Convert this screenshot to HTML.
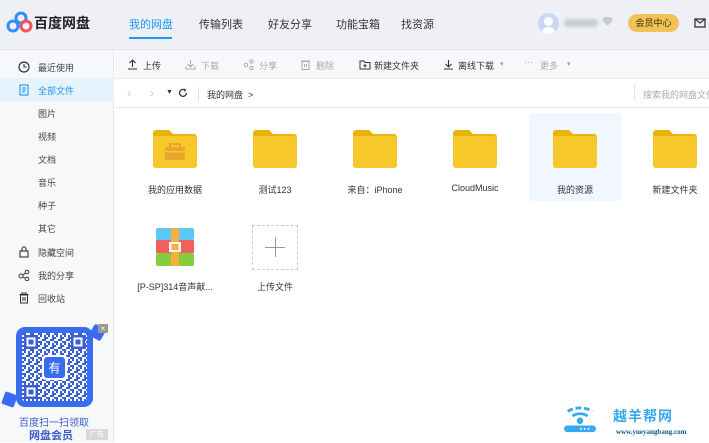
<!DOCTYPE html>
<html><head><meta charset="utf-8">
<style>
*{margin:0;padding:0;box-sizing:border-box}
body{width:709px;height:442px;overflow:hidden;background:#fff;font-family:"Liberation Sans","Noto Sans CJK SC",sans-serif;color:#333;position:relative}
.abs{position:absolute}
#top{left:0;top:0;width:709px;height:50px;background:#eef0f5;border-bottom:1px solid #e2e4ea}
.nav{position:absolute;top:16px;font-size:11px;color:#333}
#side{left:0;top:50px;width:114px;height:392px;background:#f7f8fa;border-right:1px solid #e6e8ee}
.si{position:absolute;left:38px;font-size:9px;color:#444}
.sico{position:absolute;left:18px}
#tb{left:115px;top:50px;width:594px;height:29px;background:#f7f8fa;border-bottom:1px solid #eaecf0}
.tbi{position:absolute;top:9px;font-size:9px;color:#333}
.dis{color:#aaa}
#bc{left:115px;top:79px;width:594px;height:29px;background:#fff;border-bottom:1px solid #eaecf0}
.fold{position:absolute;width:44px;height:38px}
.lbl{position:absolute;font-size:9px;color:#333;text-align:center;width:96px}
</style></head><body>
<div id="top" class="abs">
  <svg class="abs" style="left:6px;top:11px" width="28" height="22" viewBox="0 0 28 22">
    <circle cx="15" cy="7" r="5" fill="none" stroke="#2e8dfa" stroke-width="3"/>
    <circle cx="7" cy="15" r="5" fill="none" stroke="#2e8dfa" stroke-width="3"/>
    <circle cx="20" cy="15" r="5" fill="none" stroke="#f0545c" stroke-width="3"/>
  </svg>
  <div class="abs" style="left:34px;top:13px;font-size:14px;font-weight:bold;color:#222">百度网盘</div>
  <div class="nav" style="left:129px;color:#1f97f4">我的网盘</div>
  <div class="abs" style="left:129px;top:37px;width:43px;height:2px;background:#1f97f4"></div>
  <div class="nav" style="left:199px">传输列表</div>
  <div class="nav" style="left:268px">好友分享</div>
  <div class="nav" style="left:336px">功能宝箱</div>
  <div class="nav" style="left:401px">找资源</div>
  <div class="abs" style="left:538px;top:13px;width:21px;height:21px;border-radius:50%;background:#c9d9f3;overflow:hidden"><div style="position:absolute;left:6px;top:4px;width:9px;height:9px;border-radius:50%;background:#fff"></div><div style="position:absolute;left:4px;top:14px;width:13px;height:7px;border-radius:6px 6px 0 0;background:#fff"></div></div>
  <div class="abs" style="left:564px;top:19px;width:34px;height:8px;border-radius:4px;background:#c8cbd2;filter:blur(1.5px)"></div>
  <div class="abs" style="left:602px;top:17px;width:11px;height:9px;background:#c8cad0;clip-path:polygon(20% 0,80% 0,100% 35%,50% 100%,0 35%)"></div>
  <div class="abs" style="left:628px;top:14px;width:51px;height:18px;border-radius:9px;background:#f1c256;font-size:9px;color:#3a2a00;text-align:center;line-height:18px">会员中心</div>
  <svg class="abs" style="left:694px;top:18px" width="12" height="10" viewBox="0 0 12 10"><rect x="1" y="1" width="10" height="8" fill="none" stroke="#333" stroke-width="1.3"/><path d="M1 1 L6 5 L11 1" fill="none" stroke="#333" stroke-width="1.2"/></svg>
</div>

<div id="side" class="abs">
  <div class="abs" style="left:0;top:28px;width:114px;height:23px;background:#e6f2fc"></div>
  <svg class="sico" style="top:11px" width="12" height="12" viewBox="0 0 12 12"><circle cx="6" cy="6" r="5" fill="none" stroke="#333" stroke-width="1.2"/><path d="M6 3v3h2.5" fill="none" stroke="#333" stroke-width="1.1"/></svg>
  <div class="si" style="top:11px">最近使用</div>
  <svg class="sico" style="top:34px" width="12" height="12" viewBox="0 0 12 12"><rect x="2" y="1" width="8" height="10" fill="none" stroke="#1f97f4" stroke-width="1.1"/><path d="M4 4h4M4 6h4M4 8h3" stroke="#1f97f4" stroke-width="1"/></svg>
  <div class="si" style="top:34px;color:#1f97f4">全部文件</div>
  <div class="si" style="top:57px">图片</div>
  <div class="si" style="top:80px">视频</div>
  <div class="si" style="top:103px">文档</div>
  <div class="si" style="top:126px">音乐</div>
  <div class="si" style="top:149px">种子</div>
  <div class="si" style="top:172px">其它</div>
  <svg class="sico" style="top:196px" width="12" height="12" viewBox="0 0 12 12"><rect x="2" y="5" width="8" height="6" fill="none" stroke="#333" stroke-width="1.1"/><path d="M4 5V3a2 2 0 0 1 4 0v2" fill="none" stroke="#333" stroke-width="1.1"/></svg>
  <div class="si" style="top:196px">隐藏空间</div>
  <svg class="sico" style="top:219px" width="12" height="12" viewBox="0 0 12 12"><circle cx="3" cy="7" r="2" fill="none" stroke="#333"/><circle cx="9" cy="3" r="1.8" fill="none" stroke="#333"/><circle cx="9" cy="10" r="1.8" fill="none" stroke="#333"/><path d="M5 6L7.4 4M5 8l2.4 1.5" stroke="#333"/></svg>
  <div class="si" style="top:219px">我的分享</div>
  <svg class="sico" style="top:242px" width="12" height="12" viewBox="0 0 12 12"><path d="M1.5 2.5h9M4 2.5V1h4v1.5" fill="none" stroke="#333"/><rect x="2.5" y="3" width="7" height="8" fill="none" stroke="#333"/><path d="M5 5v4M7 5v4" stroke="#333"/></svg>
  <div class="si" style="top:242px">回收站</div>
  <!-- ad -->
  <div class="abs" style="left:4px;top:346px;width:0;height:0"></div>
  <div class="abs" style="left:3px;top:343px;width:13px;height:13px;background:#3a6cf0;transform:rotate(20deg);border-radius:2px"></div>
  <div class="abs" style="left:91px;top:276px;width:13px;height:13px;background:#3a6cf0;transform:rotate(30deg);border-radius:2px"></div>
  <svg class="abs" style="left:16px;top:277px" width="77" height="80" viewBox="0 0 77 80">
    <defs><pattern id="qr" width="8" height="8" patternUnits="userSpaceOnUse">
      <rect width="8" height="8" fill="#fff"/>
      <rect x="0" y="0" width="2" height="2" fill="#3a5fd0"/><rect x="4" y="0" width="2" height="4" fill="#3a5fd0"/>
      <rect x="2" y="4" width="4" height="2" fill="#3a5fd0"/><rect x="6" y="6" width="2" height="2" fill="#3a5fd0"/>
      <rect x="0" y="6" width="2" height="2" fill="#3a5fd0"/><rect x="6" y="2" width="2" height="2" fill="#3a5fd0"/>
    </pattern></defs>
    <rect width="77" height="80" rx="9" fill="#3a6cf0"/>
    <rect x="6" y="6" width="65" height="68" rx="3" fill="url(#qr)"/>
    <rect x="8" y="8" width="14" height="14" fill="#3a5fd0"/><rect x="10.5" y="10.5" width="9" height="9" fill="#fff"/><rect x="12.5" y="12.5" width="5" height="5" fill="#3a5fd0"/>
    <rect x="55" y="8" width="14" height="14" fill="#3a5fd0"/><rect x="57.5" y="10.5" width="9" height="9" fill="#fff"/><rect x="59.5" y="12.5" width="5" height="5" fill="#3a5fd0"/>
    <rect x="8" y="58" width="14" height="14" fill="#3a5fd0"/><rect x="10.5" y="60.5" width="9" height="9" fill="#fff"/><rect x="12.5" y="62.5" width="5" height="5" fill="#3a5fd0"/>
    <rect x="26" y="28" width="25" height="25" rx="4" fill="#fff"/>
    <rect x="28" y="30" width="21" height="21" rx="3" fill="#3a6cf0"/>
    <text x="38.5" y="45" font-size="12" fill="#fff" text-anchor="middle" font-family="Noto Sans CJK SC,sans-serif">有</text>
  </svg>
  <div class="abs" style="left:98px;top:274px;width:10px;height:9px;background:#999;color:#fff;font-size:8px;line-height:9px;text-align:center">×</div>
  <div class="abs" style="left:19px;top:364px;font-size:10px;color:#3a5fc8">百度扫一扫领取</div>
  <div class="abs" style="left:29px;top:377px;font-size:11px;font-weight:bold;color:#3a5fc8">网盘会员</div>
  <div class="abs" style="left:86px;top:379px;width:22px;height:11px;background:#d8d8d8;color:#fff;font-size:7px;text-align:center;line-height:11px">广告</div>
</div>

<div id="tb" class="abs">
  <svg class="abs" style="left:12px;top:9px" width="11" height="11" viewBox="0 0 11 11"><path d="M1 10h9M5.5 8V1.5M2.5 4l3-3 3 3" fill="none" stroke="#333" stroke-width="1.1"/></svg>
  <div class="tbi" style="left:28px">上传</div>
  <svg class="abs" style="left:70px;top:9px" width="11" height="11" viewBox="0 0 11 11"><path d="M1 7v3h9V7M5.5 1v7M2.5 5l3 3 3-3" fill="none" stroke="#aaa" stroke-width="1"/></svg>
  <div class="tbi dis" style="left:86px">下载</div>
  <svg class="abs" style="left:128px;top:9px" width="11" height="11" viewBox="0 0 11 11"><circle cx="3" cy="6" r="1.8" fill="none" stroke="#aaa"/><circle cx="8.5" cy="2.5" r="1.6" fill="none" stroke="#aaa"/><circle cx="8.5" cy="9" r="1.6" fill="none" stroke="#aaa"/></svg>
  <div class="tbi dis" style="left:144px">分享</div>
  <svg class="abs" style="left:185px;top:9px" width="11" height="11" viewBox="0 0 11 11"><path d="M1 2h9" stroke="#aaa"/><rect x="2" y="2.5" width="7" height="8" fill="none" stroke="#aaa"/><path d="M4.5 5v3M6.5 5v3" stroke="#aaa"/></svg>
  <div class="tbi dis" style="left:201px">删除</div>
  <svg class="abs" style="left:244px;top:9px" width="12" height="11" viewBox="0 0 12 11"><path d="M1 2h4l1 1.5h5V10H1z" fill="none" stroke="#333"/><path d="M6 5v3.5M4.3 6.8h3.4" stroke="#333"/></svg>
  <div class="tbi" style="left:259px">新建文件夹</div>
  <svg class="abs" style="left:328px;top:9px" width="11" height="11" viewBox="0 0 11 11"><path d="M1 10h9M5.5 1v7M2.5 5l3 3 3-3" fill="none" stroke="#333" stroke-width="1.1"/></svg>
  <div class="tbi" style="left:343px">离线下载</div>
  <div class="tbi" style="left:385px;color:#999;font-size:7px;top:10px">▾</div>
  <div class="tbi dis" style="left:409px;top:7px">···</div>
  <div class="tbi dis" style="left:425px">更多</div>
  <div class="tbi" style="left:452px;color:#999;font-size:7px;top:10px">▾</div>
</div>

<div id="bc" class="abs">
  <div class="abs" style="left:12px;top:7px;font-size:12px;color:#ccc">‹</div>
  <div class="abs" style="left:35px;top:7px;font-size:12px;color:#ccc">›</div>
  <div class="abs" style="left:51px;top:10px;font-size:7px;color:#333">▼</div>
  <svg class="abs" style="left:63px;top:9px" width="10" height="10" viewBox="0 0 10 10"><path d="M8.5 5A3.5 3.5 0 1 1 7 2" fill="none" stroke="#333" stroke-width="1.3"/><path d="M6 0.5l2.5 1.5-2 2" fill="#333"/></svg>
  <div class="abs" style="left:83px;top:8px;width:1px;height:14px;background:#e0e0e0"></div>
  <div class="abs" style="left:92px;top:9px;font-size:9px;color:#333">我的网盘 &nbsp;&gt;</div>
  <div class="abs" style="left:519px;top:5px;width:1px;height:16px;background:#e6e6e6"></div>
  <div class="abs" style="left:528px;top:9px;font-size:9px;color:#aaa;white-space:nowrap">搜索我的网盘文件</div>
</div>

<div class="abs" style="left:529px;top:113px;width:92px;height:88px;background:#f0f7fe;border-radius:3px"></div>

<svg width="0" height="0" style="position:absolute"><defs>
<g id="fd"><path d="M0 3a3 3 0 0 1 3-3h13l4 4H41a3 3 0 0 1 3 3v28a3 3 0 0 1-3 3H3a3 3 0 0 1-3-3z" fill="#e8b40c"/><path d="M0 9a3 3 0 0 1 3-3h38a3 3 0 0 1 3 3v26a3 3 0 0 1-3 3H3a3 3 0 0 1-3-3z" fill="#f7c82b"/></g>
</defs></svg>

<svg class="fold" style="left:153px;top:130px" viewBox="0 0 44 38"><use href="#fd"/><rect x="12" y="17" width="20" height="13" rx="1" fill="#e6a82a"/><rect x="12" y="21" width="20" height="1.5" fill="#f7c82b"/><path d="M17 17v-3h10v3" fill="none" stroke="#e6a82a" stroke-width="2"/></svg>
<svg class="fold" style="left:253px;top:130px" viewBox="0 0 44 38"><use href="#fd"/></svg>
<svg class="fold" style="left:353px;top:130px" viewBox="0 0 44 38"><use href="#fd"/></svg>
<svg class="fold" style="left:453px;top:130px" viewBox="0 0 44 38"><use href="#fd"/></svg>
<svg class="fold" style="left:553px;top:130px" viewBox="0 0 44 38"><use href="#fd"/></svg>
<svg class="fold" style="left:653px;top:130px" viewBox="0 0 44 38"><use href="#fd"/></svg>

<div class="lbl" style="left:127px;top:183px">我的应用数据</div>
<div class="lbl" style="left:227px;top:183px">测试123</div>
<div class="lbl" style="left:327px;top:183px">来自：iPhone</div>
<div class="lbl" style="left:427px;top:183px">CloudMusic</div>
<div class="lbl" style="left:527px;top:183px">我的资源</div>
<div class="lbl" style="left:627px;top:183px">新建文件夹</div>

<svg class="abs" style="left:156px;top:228px" width="38" height="38" viewBox="0 0 38 38">
  <rect x="0" y="0" width="38" height="12" rx="2" fill="#5bc8f5"/>
  <rect x="0" y="12" width="38" height="13" fill="#f25f5c"/>
  <rect x="0" y="25" width="38" height="13" rx="2" fill="#86cc3f"/>
  <rect x="15" y="0" width="8" height="38" fill="#f9ae3d"/>
  <rect x="13" y="14" width="12" height="10" fill="#fff"/>
  <rect x="15.5" y="16" width="7" height="6" fill="#f9ae3d"/>
</svg>
<div class="abs" style="left:252px;top:225px;width:46px;height:45px;border:1px dashed #ccc"></div>
<div class="abs" style="left:265px;top:247px;width:20px;height:1px;background:#999"></div>
<div class="abs" style="left:275px;top:237px;width:1px;height:20px;background:#999"></div>
<div class="lbl" style="left:127px;top:280px">[P-SP]314音声献...</div>
<div class="lbl" style="left:227px;top:280px">上传文件</div>

<!-- watermark -->
<svg class="abs" style="left:562px;top:402px" width="36" height="32" viewBox="0 0 38 34">
  <path d="M6 10a18 12 0 0 1 26 0" fill="none" stroke="#36aaf0" stroke-width="3" stroke-dasharray="6 3"/>
  <path d="M11 15a11 8 0 0 1 16 0" fill="none" stroke="#36aaf0" stroke-width="3"/>
  <circle cx="19" cy="20" r="3.5" fill="#36aaf0"/>
  <rect x="2" y="25" width="34" height="7" rx="3.5" fill="#36aaf0"/>
  <circle cx="20" cy="28.5" r="1" fill="#fff"/><circle cx="24" cy="28.5" r="1" fill="#fff"/><circle cx="28" cy="28.5" r="1" fill="#fff"/>
</svg>
<div class="abs" style="left:613px;top:406px;font-size:14px;font-weight:bold;color:#36aaf0;letter-spacing:1px">越羊帮网</div>
<div class="abs" style="left:616px;top:428px;font-size:7px;font-weight:bold;font-family:'Liberation Serif',serif;color:#0a5a8a">www.yueyangbang.com</div>
</body></html>
